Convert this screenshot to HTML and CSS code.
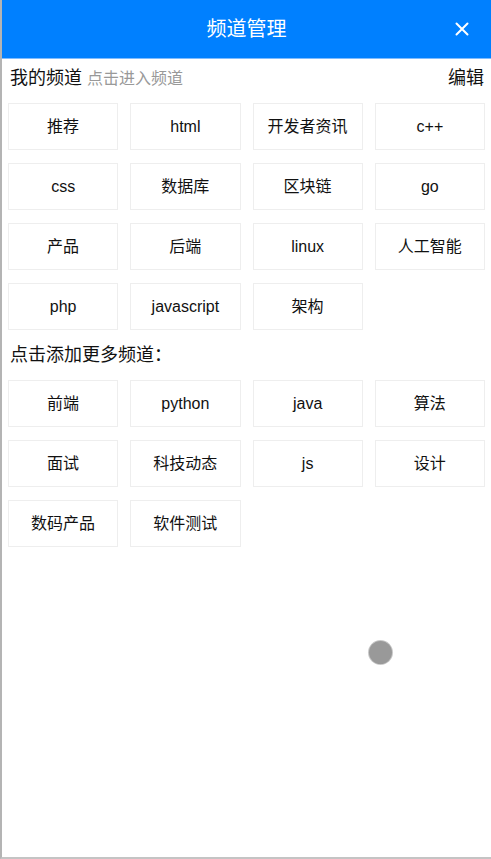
FILE: index.html
```html
<!DOCTYPE html>
<html lang="zh">
<head>
<meta charset="utf-8">
<title>频道管理</title>
<link rel="stylesheet" href="styles.css">
</head>
<body>
<div class="page">
  <header class="topbar">
    <h1 class="topbar-title">频道管理</h1>
    <button class="close-btn" aria-label="关闭">
      <svg width="16" height="16" viewBox="0 0 16 16"><path d="M2.5 2.5 L13.5 13.5 M13.5 2.5 L2.5 13.5" stroke="#fff" stroke-width="2" stroke-linecap="round" fill="none"/></svg>
    </button>
  </header>

  <div class="section-head">
    <div class="section-title">我的频道 <span class="hint">点击进入频道</span></div>
    <div class="edit">编辑</div>
  </div>
  <div class="grid">
    <div class="card">推荐</div>
    <div class="card">html</div>
    <div class="card">开发者资讯</div>
    <div class="card">c++</div>
    <div class="card">css</div>
    <div class="card">数据库</div>
    <div class="card">区块链</div>
    <div class="card">go</div>
    <div class="card">产品</div>
    <div class="card">后端</div>
    <div class="card">linux</div>
    <div class="card">人工智能</div>
    <div class="card">php</div>
    <div class="card">javascript</div>
    <div class="card">架构</div>
  </div>

  <div class="section-head">
    <div class="section-title">点击添加更多频道：</div>
  </div>
  <div class="grid">
    <div class="card">前端</div>
    <div class="card">python</div>
    <div class="card">java</div>
    <div class="card">算法</div>
    <div class="card">面试</div>
    <div class="card">科技动态</div>
    <div class="card">js</div>
    <div class="card">设计</div>
    <div class="card">数码产品</div>
    <div class="card">软件测试</div>
  </div>

  <div class="touch-dot"></div>
</div>
</body>
</html>
```

FILE: styles.css
```css
* { box-sizing: border-box; }
html, body { margin: 0; padding: 0; background: #fff; }
body {
  font-family: "Liberation Sans", "Noto Sans CJK SC", sans-serif;
  color: #111;
  line-height: 1.2;
}
.page {
  position: relative;
  width: 491px;
  height: 859px;
  border-left: 2px solid #b4b4b4;
  border-bottom: 2px solid #c4c4c4;
  overflow: hidden;
}
.topbar {
  position: relative;
  height: 59px;
  background: #0080ff;
  border-bottom: 1px solid #7fbcff;
  display: flex;
  align-items: center;
  justify-content: center;
}
.topbar-title {
  margin: 0;
  font-size: 20px;
  line-height: 24px;
  font-weight: normal;
  color: #fff;
}
.close-btn {
  position: absolute;
  right: 21px;
  top: 21px;
  width: 16px;
  height: 16px;
  padding: 0;
  border: 0;
  background: none;
  display: flex;
}
.section-head {
  height: 38px;
  padding: 0 7px 0 8px;
  display: flex;
  align-items: center;
  justify-content: space-between;
  font-size: 18px;
  line-height: 22px;
}
.hint {
  font-size: 16px;
  color: #999;
}
.grid {
  display: grid;
  grid-template-columns: repeat(4, 1fr);
  grid-auto-rows: 47px;
  gap: 13px 12px;
  padding: 6px 6px 6px 6px;
}
.card {
  border: 1px solid #eee;
  display: flex;
  align-items: center;
  justify-content: center;
  font-size: 16px;
  line-height: 20px;
  color: #111;
}
.touch-dot {
  position: absolute;
  left: 367px;
  top: 641px;
  width: 23px;
  height: 23px;
  border-radius: 50%;
  background: #999;
  box-shadow: 0 0 0 1px #c8c8c8;
}
```
